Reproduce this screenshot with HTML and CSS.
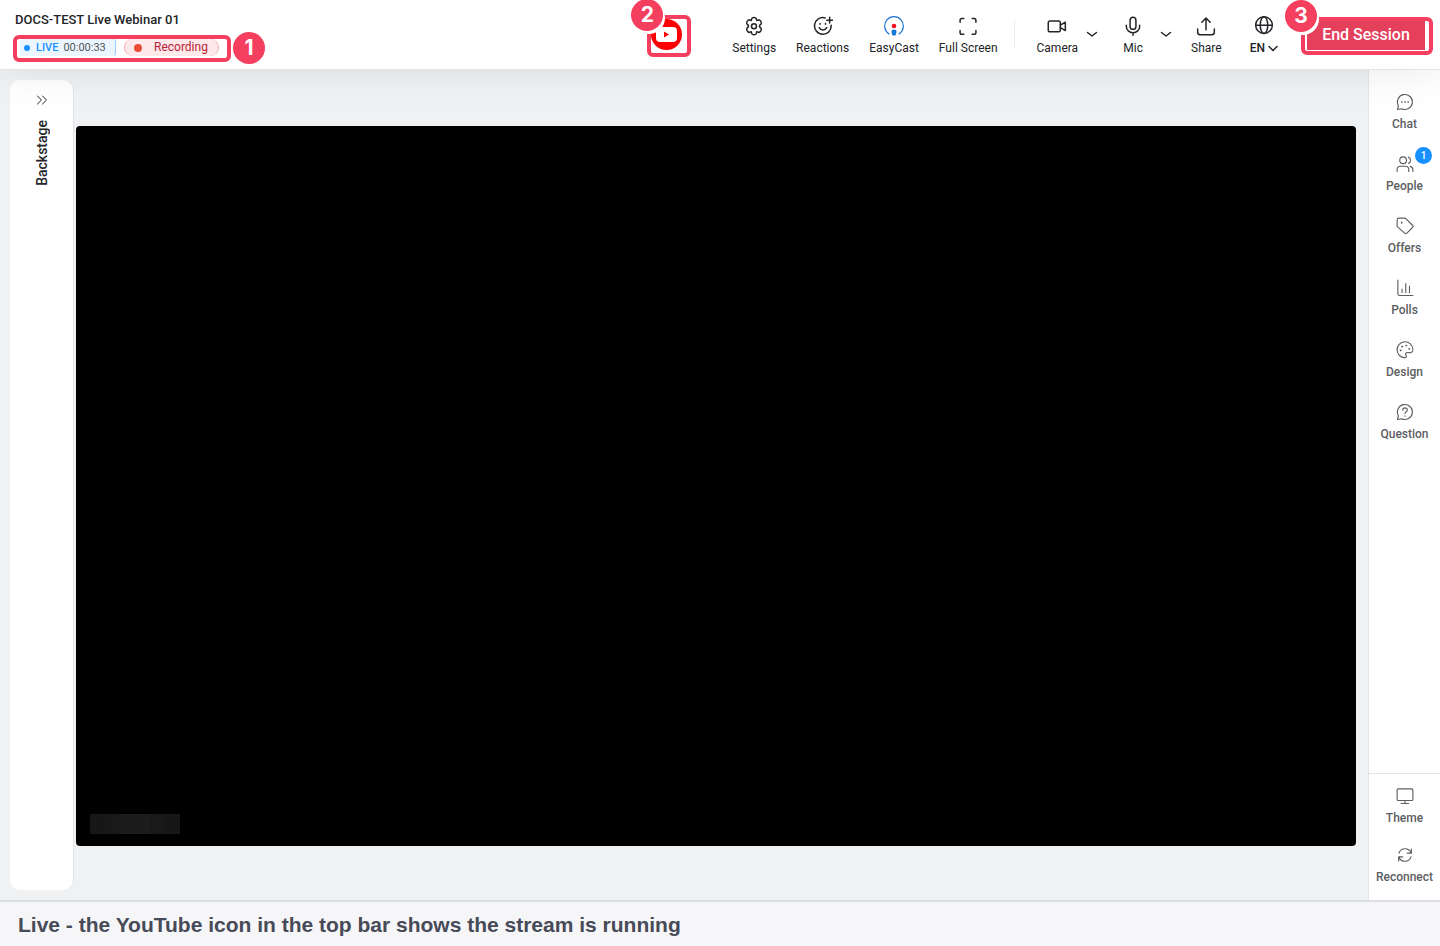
FILE: index.html
```html
<!DOCTYPE html>
<html lang="en">
<head>
<meta charset="utf-8">
<meta name="viewport" content="width=device-width, initial-scale=1">
<title>DOCS-TEST Live Webinar 01</title>
<link rel="stylesheet" href="styles.css">
</head>
<body>
<header class="topbar">
  <div class="session">
    <h1 class="session-title">DOCS-TEST Live Webinar 01</h1>
    <div class="callout callout-status">
      <span class="live"><i class="dot dot-blue"></i><b>LIVE</b><time>00:00:33</time></span>
      <span class="recording"><i class="dot dot-red"></i>Recording</span>
      <span class="marker marker-1">1</span>
    </div>
  </div>
  <div class="callout callout-youtube">
    <svg class="youtube" viewBox="0 0 32 32" role="img" aria-label="YouTube"><circle cx="15.500" cy="15.500" r="15.500" fill="#f00"/><rect x="5" y="8" width="21" height="15" rx="4" fill="#fff"/><path d="M13 12.500v6l5-3z" fill="#f00"/></svg>
    <span class="marker marker-2">2</span>
  </div>
  <nav class="tools" aria-label="Session tools">
    <button class="tool"><svg class="icon" viewBox="0 0 24 24"><path d="M9.300 3.200C9.800 1.300 14.200 1.300 14.700 3.200L15.200 5.300L17.400 4.700C19.300 4.200 21.800 8.200 20.400 9.700L18.700 11.300V13L20.400 14.600C21.800 16.100 19.300 20.100 17.400 19.600L15.200 19L14.700 21.100C14.200 23 9.800 23 9.300 21.100L8.800 19L6.600 19.600C4.700 20.100 2.200 16.100 3.600 14.600L5.300 13V11.300L3.600 9.700C2.200 8.200 4.700 4.200 6.600 4.700L8.800 5.300z"/><circle cx="12" cy="12.200" r="3"/></svg>Settings</button>
    <button class="tool"><svg class="icon" viewBox="0 0 24 24"><path d="M14.500 2.300A10 10 0 1 0 21.800 11M20 1.500v7M16.500 5h7M7.500 14c1.800 3.600 7.200 3.600 9 0M8.500 9v1M15 9v1"/></svg>Reactions</button>
    <button class="tool"><svg class="icon" viewBox="0 0 24 24"><path d="M6 21.500A11.200 11.200 0 1 1 18 21.500" stroke="#1976d2" stroke-width="1.400"/><circle cx="12" cy="12" r="2.800" fill="#f01020" stroke="none"/><path d="M9 18.500c0-3.200 6-3.200 6 0 0 2-.8 4.500-1.500 5h-3C9.800 23 9 20.500 9 18.500z" fill="#1976d2" stroke="none"/></svg>EasyCast</button>
    <button class="tool"><svg class="icon" viewBox="0 0 24 24"><path d="M2.500 7.500V5q0-2 2-2h2.500M17 3h2.500q2 0 2 2v2.500M21.500 17.500V20q0 2-2 2H17M7 22H4.500q-2 0-2-2v-2.500"/></svg>Full Screen</button>
  </nav>
  <div class="devices">
    <button class="tool"><svg class="icon" viewBox="0 0 24 24"><rect x="1.500" y="6" width="14.500" height="13" rx="2"/><path d="M16 11l6-3.500v10L16 14"/></svg>Camera</button>
    <button class="more more-camera" aria-label="Camera options"><svg class="chevron" viewBox="0 0 12 12"><path d="M1.500 4.500L6 8l4.500-3.500"/></svg></button>
    <button class="tool"><svg class="icon" viewBox="0 0 24 24"><rect x="8.500" y="1.500" width="7" height="14.500" rx="3.500"/><path d="M4 11v1.500a8 7.500 0 0 0 16 0V11M12 20v3"/></svg>Mic</button>
    <button class="more more-mic" aria-label="Mic options"><svg class="chevron" viewBox="0 0 12 12"><path d="M1.500 4.500L6 8l4.500-3.500"/></svg></button>
    <button class="tool share"><svg class="icon" viewBox="0 0 24 24"><path d="M12 16.500V2.500M7 7.500l5-5 5 5M2 15.500v4q0 3 3 3h14q3 0 3-3v-4"/></svg>Share</button>
    <button class="tool language"><svg class="icon" viewBox="0 0 24 24"><circle cx="12" cy="11" r="10"/><ellipse cx="12" cy="11" rx="4.500" ry="10"/><path d="M2 11h20"/></svg><span>EN<svg class="chevron" viewBox="0 0 12 12"><path d="M2 4.500l4 4 4-4"/></svg></span></button>
  </div>
  <div class="callout callout-end">
    <button class="end">End Session</button>
    <span class="marker marker-3">3</span>
  </div>
</header>
<main class="workspace">
  <aside class="backstage">
    <button class="expand" aria-label="Expand backstage"><svg class="icon-double" viewBox="0 0 12 12"><path d="M1.500 2l4 4-4 4M6.500 2l4 4-4 4"/></svg></button>
    <h2 class="backstage-title">Backstage</h2>
  </aside>
  <section class="stage-area">
    <div class="stage"><div class="name-tag"><i></i><i></i><i></i><i></i><i></i><i></i></div></div>
  </section>
  <aside class="sidebar">
    <nav class="side-group" aria-label="Panels">
      <button class="side-item"><svg class="icon" viewBox="0 0 24 24"><path d="M2 22l1.200-5A10 10 0 1 1 7.500 21z"/><path d="M7.500 12h.5M12 12h.5M16 12h.5" stroke-width="2"/></svg>Chat</button>
      <button class="side-item"><svg class="icon" viewBox="0 0 24 24"><circle cx="9.500" cy="7" r="4.500"/><path d="M1.500 22v-2.500q0-4.500 4.500-4.500h6.500q4.500 0 4.500 4.500V22M16.500 2.800a4.500 4.500 0 0 1 0 8.400M19 15.200q3.500 1 3.500 4.300V22"/></svg>People<span class="count">1</span></button>
      <button class="side-item"><svg class="icon" viewBox="0 0 24 24"><path d="M1.500 4q0-2.500 2.500-2.500h7.500q1 0 2 1l8.500 8.500q1.500 1.500 0 3l-7.500 7.500q-1.500 1.500-3 0L2.500 13.500q-1-1-1-2z"/><path d="M7.500 7v1" stroke-width="2"/></svg>Offers</button>
      <button class="side-item"><svg class="icon" viewBox="0 0 24 24"><path d="M2.500 1.500V20q0 2 2 2H22.500M8 13.500v4.500M13 6v12M18 9.500v8.500"/></svg>Polls</button>
      <button class="side-item"><svg class="icon" viewBox="0 0 24 24"><path d="M13 22C7 23 1.500 18 1.500 12A10.500 10.500 0 0 1 22.500 11c.3 4-2.500 5-5.500 4.500-4-.5-5 1-3.800 3 .8 1.500.8 3-.2 3.500z"/><path d="M6 12.500h.5M8 7.500h.5M13.500 6h.5M17.500 10.500h.5" stroke-width="2.200"/></svg>Design</button>
      <button class="side-item"><svg class="icon" viewBox="0 0 24 24"><path d="M2 22l1.200-5A10 10 0 1 1 7.500 21z"/><path d="M9 9.500c0-4 6-4 6 0 0 2.500-3 2-3 4.500M12 17v.5"/></svg>Question</button>
    </nav>
    <div class="side-group side-bottom">
      <button class="side-item"><svg class="icon" viewBox="0 0 24 24"><rect x="1.500" y="2.500" width="21" height="15.500" rx="1.500"/><path d="M12 18v4M7 22h10"/></svg>Theme</button>
      <button class="side-item"><svg class="icon" viewBox="0 0 24 24"><path d="M4 9.500A8.500 8.500 0 0 1 20 9M20.500 4v5.500H15M20 14.500A8.500 8.500 0 0 1 4 15M3.500 20v-5.500H9"/></svg>Reconnect</button>
    </div>
  </aside>
</main>
<footer class="caption">Live - the YouTube icon in the top bar shows the stream is running</footer>
</body>
</html>
```
FILE: styles.css
```css
* { box-sizing: border-box; }
body {
  margin: 0;
  min-height: 100vh;
  display: flex;
  flex-direction: column;
  background: #f0f1f3;
  color: #222427;
  font-family: Roboto, sans-serif;
  font-size: 12px;
  line-height: 16px;
}
button {
  padding: 0;
  border: 0;
  background: none;
  color: inherit;
  font: inherit;
  cursor: pointer;
}
svg { fill: none; stroke: currentColor; stroke-width: 1.5; stroke-linecap: round; stroke-linejoin: round; }
.icon { display: block; width: 20px; height: 20px; }
.chevron { width: 12px; height: 12px; }

.topbar {
  position: relative;
  z-index: 1;
  display: flex;
  align-items: flex-start;
  height: 70px;
  padding-right: 7px;
  background: #fff;
  border-bottom: 1px solid #e3e4e7;
  box-shadow: 0 4px 40px rgba(0, 0, 0, 0.08);
}
.session { padding: 10px 0 0 13px; margin-right: auto; }
.session-title { margin: 0 0 5px 2px; font-size: 13px; font-weight: 500; line-height: 20px; }
.callout { position: relative; border: 4px solid #f43f5e; border-radius: 6px; }
.callout-status { display: flex; gap: 8px; width: 218px; height: 27px; padding: 0 3px; font-size: 11px; line-height: 17px; }
.live {
  display: flex;
  align-items: center;
  width: 96px;
  height: 17px;
  padding-left: 4px;
  background: #ebf5ff;
  border-right: 1px solid #91caff;
  border-radius: 3px;
  color: #555;
}
.live b { margin: 0 5px 0 6px; font-weight: 500; color: #1890ff; }
.dot { width: 6px; height: 6px; border-radius: 50%; }
.dot-blue { background: #1890ff; }
.dot-red { width: 8px; height: 8px; background: #e94b35; }
.recording {
  display: flex;
  align-items: center;
  gap: 12px;
  width: 95px;
  height: 17px;
  padding-left: 9px;
  border: 1px solid #f5a9b2;
  border-width: 0 1px;
  border-radius: 10px;
  background: #fde8ea;
  color: #b91c36;
  font-size: 12px;
}
.marker {
  position: absolute;
  width: 32px;
  height: 32px;
  border-radius: 50%;
  background: #f43f5e;
  color: #fff;
  font: 700 21px/32px Inter, sans-serif;
  text-align: center;
}
.marker-1 { left: 216px; top: -7px; }
.marker-2 { left: -20px; top: -20px; box-shadow: 2px 3px 0 #fff; }
.marker-3 { left: -20px; top: -21px; box-shadow: 2px 3px 0 #fff; }
.callout-youtube { width: 44px; height: 42px; margin: 15px 41px 0 0; }
.youtube { display: block; width: 32px; height: 32px; stroke: none; }

.tools, .devices { display: flex; padding-top: 16px; }
.tools { gap: 20px; padding-right: 16px; }
.tool { display: flex; flex-direction: column; align-items: center; gap: 4px; white-space: nowrap; }
.tool .icon { stroke-width: 1.8; }
.devices {
  margin-right: 22px;
  padding-left: 23px;
  background: linear-gradient(#eceded, #eceded) 0 20px / 1px 29px no-repeat;
}
.more { width: 12px; height: 12px; margin-top: 12px; line-height: 12px; }
.more .chevron { display: block; }
.more-camera { margin-left: 8px; margin-right: 25px; }
.more-mic { margin-left: 17px; margin-right: 19px; }
.share { margin-right: 28px; }
.language span { display: flex; align-items: center; gap: 2px; font-weight: 500; }
.callout-end { width: 132px; height: 38px; margin-top: 17px; padding: 0 4px 1px 2px; }
.end { display: block; width: 100%; height: 29px; padding-bottom: 2px; background: #e5405b; color: #fff; font-size: 16px; font-weight: 500; line-height: 27px; white-space: nowrap; }

.workspace { flex: 1; display: flex; }
.backstage {
  flex: none;
  display: flex;
  flex-direction: column;
  align-items: center;
  gap: 14px;
  width: 64px;
  margin: 10px 0 10px 10px;
  padding-top: 14px;
  border-right: 1px solid #e3e4e7;
  border-radius: 10px;
  background: #fff;
}
.icon-double { display: block; width: 12px; height: 12px; stroke-width: 1; }
.backstage-title { margin: 0; writing-mode: vertical-rl; transform: rotate(180deg); font-size: 14px; font-weight: 500; line-height: 18px; }
.stage-area { flex: 1; display: flex; align-items: center; padding: 2px 12px 0 2px; }
.stage { flex: 1; display: flex; align-items: flex-end; aspect-ratio: 16 / 9; padding: 12px 14px; border-radius: 4px; background: #000; }
.name-tag { display: flex; width: 90px; height: 20px; background: #181818; }
.name-tag i { flex: 1; background: #171717; }
.name-tag i:nth-child(2), .name-tag i:nth-child(5) { background: #191919; }
.name-tag i:nth-child(3), .name-tag i:nth-child(4) { background: #1c1c1c; }

.sidebar { flex: none; display: flex; flex-direction: column; justify-content: space-between; width: 72px; border-left: 1px solid #e3e4e7; background: #fff; color: #5c5e62; font-weight: 500; }
.side-group { display: flex; flex-direction: column; gap: 20px; padding-top: 22px; }
.side-item { position: relative; display: flex; flex-direction: column; align-items: center; gap: 4px; height: 42px; }
.side-item .icon { width: 18px; height: 20px; }
.side-bottom { gap: 17px; padding: 12px 0 13px; border-top: 1px solid #e3e4e7; }
.count { position: absolute; right: 8px; top: -7px; width: 17px; height: 17px; border-radius: 50%; background: #1890ff; color: #fff; font-size: 10px; line-height: 17px; }
.caption { flex: none; height: 46px; padding: 0 18px; border-top: 2px solid #dcdee5; background: #f6f6f9; color: #474a57; font: 700 21px/46px "Liberation Sans", sans-serif; }
```
